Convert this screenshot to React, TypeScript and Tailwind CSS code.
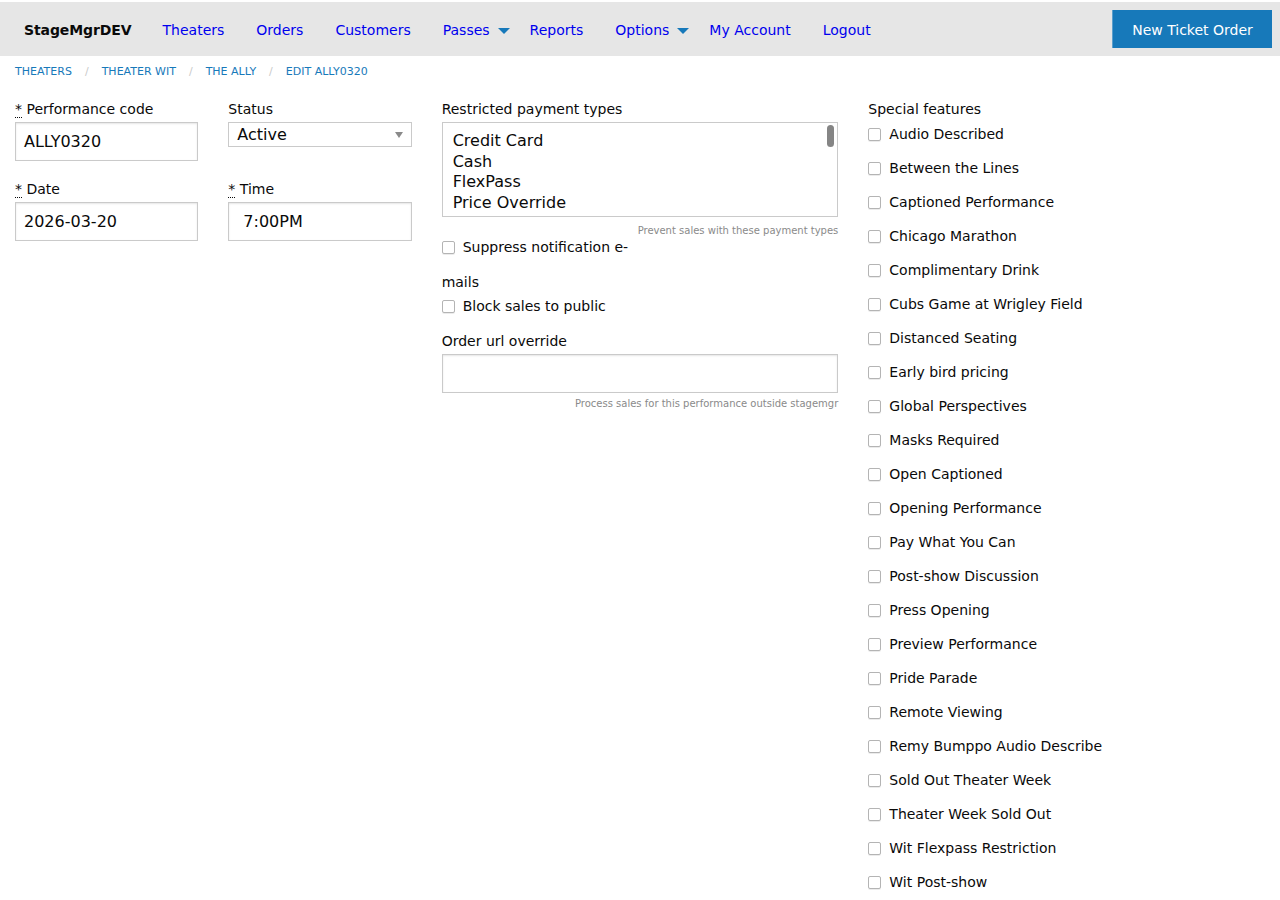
const navLinks: { label: string; dropdown?: boolean }[] = [
  { label: 'Theaters' },
  { label: 'Orders' },
  { label: 'Customers' },
  { label: 'Passes', dropdown: true },
  { label: 'Reports' },
  { label: 'Options', dropdown: true },
  { label: 'My Account' },
  { label: 'Logout' },
]

const crumbs = ['Theaters', 'Theater Wit', 'The Ally', 'Edit ALLY0320']

const paymentTypes = ['Credit Card', 'Cash', 'FlexPass', 'Price Override', 'Comp Voucher']

const features = [
  'Audio Described',
  'Between the Lines',
  'Captioned Performance',
  'Chicago Marathon',
  'Complimentary Drink',
  'Cubs Game at Wrigley Field',
  'Distanced Seating',
  'Early bird pricing',
  'Global Perspectives',
  'Masks Required',
  'Open Captioned',
  'Opening Performance',
  'Pay What You Can',
  'Post-show Discussion',
  'Press Opening',
  'Preview Performance',
  'Pride Parade',
  'Remote Viewing',
  'Remy Bumppo Audio Describe',
  'Sold Out Theater Week',
  'Theater Week Sold Out',
  'Wit Flexpass Restriction',
  'Wit Post-show',
]

function Checkbox() {
  return (
    <input
      type="checkbox"
      className="appearance-none w-[13px] h-[13px] shrink-0 rounded-[2px] border border-[#b4b4b4] bg-white shadow-[0_1px_0_rgba(0,0,0,0.08)]"
    />
  )
}

function Req() {
  return <abbr className="no-underline border-b border-dotted border-[#0a0a0a] leading-none">*</abbr>
}

function FieldLabel({ children }: { children: React.ReactNode }) {
  return <label className="block text-[14px] leading-[25px] text-[#0a0a0a]">{children}</label>
}

function TextInput({ value, className = '' }: { value: string; className?: string }) {
  return (
    <div
      className={`h-[39px] border border-[#cacaca] bg-white shadow-[inset_0_1px_2px_rgba(10,10,10,0.1)] flex items-center px-2 text-[16px] text-[#0a0a0a] ${className}`}
    >
      {value}
    </div>
  )
}

export default function App() {
  return (
    <div className="min-h-[900px] bg-white text-[#0a0a0a] font-['DejaVu_Sans',Verdana,sans-serif]">
      <div className="h-[2px]" />

      {/* Top bar */}
      <div className="h-[54px] bg-[#e6e6e6] flex items-center">
        <div className="pl-6 pr-[15px] pt-[3px] text-[14px] font-bold text-[#0a0a0a] tracking-[-0.1px]">StageMgrDEV</div>
        <ul className="flex items-center pt-[3px] text-[14px]">
          {navLinks.map((l) => (
            <li
              key={l.label}
              className={`relative text-[#0000ee] ${l.dropdown ? 'pl-4 pr-6' : 'px-4'}`}
            >
              {l.label}
              {l.dropdown && (
                <span className="absolute right-[4px] top-1/2 -translate-y-1/2 w-0 h-0 border-l-[6px] border-r-[6px] border-t-[6px] border-l-transparent border-r-transparent border-t-[#1779ba]" />
              )}
            </li>
          ))}
        </ul>
        <div className="ml-auto mr-2">
          <button className="h-[38px] w-[160px] pt-[2px] bg-[#1779ba] text-white text-[14px] border-l border-[#5b9fcc]">
            New Ticket Order
          </button>
        </div>
      </div>

      {/* Breadcrumbs */}
      <nav className="pt-[8px] px-[15px]">
        <ul className="flex items-center text-[11px] leading-[16px] uppercase text-[#1779ba]">
          {crumbs.map((c, i) => (
            <li key={c} className="flex items-center">
              {i > 0 && <span className="mx-[13px] text-[#cacaca]">/</span>}
              {c}
            </li>
          ))}
        </ul>
      </nav>

      {/* Form */}
      <div className="grid grid-cols-12 mt-[17px]">
        <div className="col-span-2 px-[15px]">
          <FieldLabel>
            <Req /> Performance code
          </FieldLabel>
          <TextInput value="ALLY0320" />
          <div className="mt-4">
            <FieldLabel>
              <Req /> Date
            </FieldLabel>
            <TextInput value="2026-03-20" />
          </div>
        </div>

        <div className="col-span-2 px-[15px]">
          <FieldLabel>Status</FieldLabel>
          <div className="h-[25px] border border-[#cacaca] bg-white flex items-center justify-between pl-2 pr-[8px] text-[16px]">
            <span>Active</span>
            <span className="w-0 h-0 border-l-[4px] border-r-[4px] border-t-[6px] border-l-transparent border-r-transparent border-t-[#8a8a8a]" />
          </div>
          <div className="mt-[30px]">
            <FieldLabel>
              <Req /> Time
            </FieldLabel>
            <TextInput value="7:00PM" className="pl-[14px]" />
          </div>
        </div>

        <div className="col-span-4 px-[15px]">
          <FieldLabel>Restricted payment types</FieldLabel>
          <div className="relative h-[95px] border border-[#cacaca] bg-white overflow-hidden pl-[10px] pt-[8px] text-[16px] leading-[20.5px]">
            {paymentTypes.map((p) => (
              <div key={p}>{p}</div>
            ))}
            <span className="absolute right-[3px] top-[2px] w-[7px] h-[22px] rounded-full bg-[#858585]" />
          </div>
          <p className="mt-[6px] text-right text-[10px] leading-[15px] text-[#8a8a8a]">
            Prevent sales with these payment types
          </p>
          <div className="flex items-center gap-[8px] h-[19px] text-[14px]">
            <Checkbox />
            <span>Suppress notification e-</span>
          </div>
          <div className="mt-[16px] text-[14px] leading-[19px]">mails</div>
          <div className="mt-[5px] flex items-center gap-[8px] h-[19px] text-[14px]">
            <Checkbox />
            <span>Block sales to public</span>
          </div>
          <div className="mt-[13px]">
            <FieldLabel>Order url override</FieldLabel>
            <TextInput value="" />
          </div>
          <p className="mt-[3px] text-right text-[10px] leading-[15px] text-[#8a8a8a]">
            Process sales for this performance outside stagemgr
          </p>
        </div>

        <div className="col-span-4 px-[15px]">
          <FieldLabel>Special features</FieldLabel>
          <ul className="-mt-[5px]">
            {features.map((f) => (
              <li key={f} className="h-[34px] flex items-center gap-[8px] text-[14px]">
                <Checkbox />
                <span>{f}</span>
              </li>
            ))}
          </ul>
        </div>
      </div>
    </div>
  )
}
